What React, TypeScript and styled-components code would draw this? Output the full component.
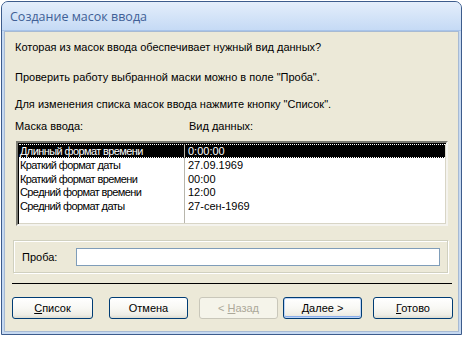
import React from "react";
import styled, { createGlobalStyle } from "styled-components";

const Global = createGlobalStyle`
  html, body { margin: 0; padding: 0; background: #ffffff; }
  body { font-family: "Liberation Sans", Arial, sans-serif; }
`;

const Page = styled.div`
  width: 465px;
  height: 338px;
  overflow: hidden;
  background: #ffffff;
  padding: 1px 0 0 1px;
  box-sizing: border-box;
`;

const Window = styled.div`
  width: 461px;
  height: 334px;
  box-sizing: border-box;
  border: 1px solid #3d5c8c;
  border-radius: 7px 7px 0 0;
  background: #c6d9f1;
  display: flex;
  flex-direction: column;
`;

const TitleBar = styled.div`
  height: 28px;
  flex: none;
  border-radius: 6px 6px 0 0;
  background: linear-gradient(#e4eefb 0%, #d6e5f8 45%, #c5daf5 100%);
  border-bottom: 1px solid #a8c4ea;
  display: flex;
  align-items: center;
  padding-left: 8px;
  font-family: "Open Sans", "DejaVu Sans", sans-serif;
  font-size: 12.5px;
  color: #3f5f96;
`;

const Client = styled.div`
  flex: 1;
  margin: 0 2px 2px 2px;
  background: #ece9d8;
  border: 1px solid #a7bad3;
  display: flex;
  flex-direction: column;
  padding: 9px 0 0 10px;
  font-family: "Liberation Sans", Arial, sans-serif;
  font-size: 11px;
  color: #000;
`;

const Line = styled.div<{ $gap: number }>`
  height: 13px;
  line-height: 13px;
  margin-top: ${(p) => p.$gap}px;
  white-space: nowrap;
`;

const Headers = styled.div`
  display: flex;
  height: 13px;
  line-height: 13px;
  margin-top: 9px;
`;

const HeaderCell = styled.div<{ $w: number }>`
  width: ${(p) => p.$w}px;
`;

const List = styled.div`
  margin: 8px 0 0 1px;
  width: 432px;
  height: 85px;
  box-sizing: border-box;
  border-style: solid;
  border-width: 2px;
  border-color: #7a7a72 #f4f3ee #f4f3ee #7a7a72;
  box-shadow: inset 1px 1px 0 #000, inset -1px -1px 0 #d8d5c6;
  background: #fff;
  position: relative;
  padding: 1px 1px 0 0;
  font-size: 11px;
`;

const Divider = styled.div`
  position: absolute;
  left: 166px;
  top: 1px;
  bottom: 1px;
  width: 1px;
  background: #b8b6ac;
`;

const Row = styled.div<{ $sel?: boolean }>`
  display: flex;
  align-items: center;
  height: ${(p) => (p.$sel ? "14px" : "13.75px")};
  margin-left: 1px;
  box-sizing: border-box;
  background: ${(p) => (p.$sel ? "#000" : "transparent")};
  color: ${(p) => (p.$sel ? "#fff" : "#000")};
  border-top: ${(p) => (p.$sel ? "1px dotted #fff" : "none")};
  border-bottom: ${(p) => (p.$sel ? "1px dotted #fff" : "none")};
`;

const Cell = styled.div<{ $w?: number; $tight?: boolean }>`
  width: ${(p) => (p.$w ? `${p.$w}px` : "auto")};
  padding-left: 1px;
  white-space: nowrap;
  line-height: 12px;
  letter-spacing: ${(p) => (p.$tight ? "-0.6px" : "0")};
`;

const Group = styled.div`
  margin: 14px 0 0 -2px;
  width: 435px;
  height: 33px;
  box-sizing: border-box;
  border: 1px solid #d0d0bf;
  box-shadow: inset 1px 1px 0 #fff, 1px 1px 0 #fff;
  display: flex;
  align-items: center;
  padding: 0 7px 0 8px;
`;

const GroupLabel = styled.div`
  width: 54px;
  flex: none;
`;

const Input = styled.div`
  flex: 1;
  height: 18px;
  box-sizing: border-box;
  border: 1px solid #7f9db9;
  background: #fff;
`;

const Separator = styled.div`
  margin: 10px 0 0 -3px;
  width: 440px;
  height: 1px;
  background: #000;
`;

const Buttons = styled.div`
  display: flex;
  margin: 13px 0 0 -3px;
`;

const Button = styled.div<{ $gap: number; $w: number; $disabled?: boolean; $default?: boolean }>`
  margin-left: ${(p) => p.$gap}px;
  width: ${(p) => p.$w}px;
  height: 22px;
  box-sizing: border-box;
  border: 1px solid ${(p) => (p.$disabled ? "#c9c7ba" : "#003c74")};
  border-radius: 3px;
  background: ${(p) =>
    p.$disabled
      ? "#f5f4ea"
      : "linear-gradient(#ffffff 0%, #f8f8f4 50%, #eeede5 85%, #dcdbd0 100%)"};
  box-shadow: ${(p) =>
    p.$default ? "inset 0 0 0 1px #bcd4f6, inset 0 -1px 0 1px #89adea" : "none"};
  display: flex;
  align-items: center;
  justify-content: center;
  color: ${(p) => (p.$disabled ? "#aca899" : "#000")};
  font-size: 11px;
  white-space: pre;
`;

const Label = styled.span``;

const U = styled.span`
  text-decoration: underline;
`;

const rows = [
  ["Длинный формат времени", "0:00:00"],
  ["Краткий формат даты", "27.09.1969"],
  ["Краткий формат времени", "00:00"],
  ["Средний формат времени", "12:00"],
  ["Средний формат даты", "27-сен-1969"],
];

export default function App() {
  return (
    <Page>
      <Global />
      <Window>
        <TitleBar>Создание масок ввода</TitleBar>
        <Client>
          <Line $gap={0}>Которая из масок ввода обеспечивает нужный вид данных?</Line>
          <Line $gap={17}>Проверить работу выбранной маски можно в поле "Проба".</Line>
          <Line $gap={14}>Для изменения списка масок ввода нажмите кнопку "Список".</Line>
          <Headers>
            <HeaderCell $w={174}>Маска ввода:</HeaderCell>
            <HeaderCell $w={150}>Вид данных:</HeaderCell>
          </Headers>
          <List>
            <Divider />
            {rows.map((r, i) => (
              <Row key={i} $sel={i === 0}>
                <Cell $w={167} $tight>
                  {r[0]}
                </Cell>
                <Cell>{r[1]}</Cell>
              </Row>
            ))}
          </List>
          <Group>
            <GroupLabel>Проба:</GroupLabel>
            <Input />
          </Group>
          <Separator />
          <Buttons>
            <Button $gap={0} $w={81}>
              <Label>
                <U>С</U>писок
              </Label>
            </Button>
            <Button $gap={16} $w={79}>
              <Label>Отмена</Label>
            </Button>
            <Button $gap={11} $w={79} $disabled>
              <Label>
                {"< "}
                <U>Н</U>азад
              </Label>
            </Button>
            <Button $gap={5} $w={79} $default>
              <Label>
                <U>Д</U>алее &gt;
              </Label>
            </Button>
            <Button $gap={11} $w={80}>
              <Label>
                <U>Г</U>отово
              </Label>
            </Button>
          </Buttons>
        </Client>
      </Window>
    </Page>
  );
}
